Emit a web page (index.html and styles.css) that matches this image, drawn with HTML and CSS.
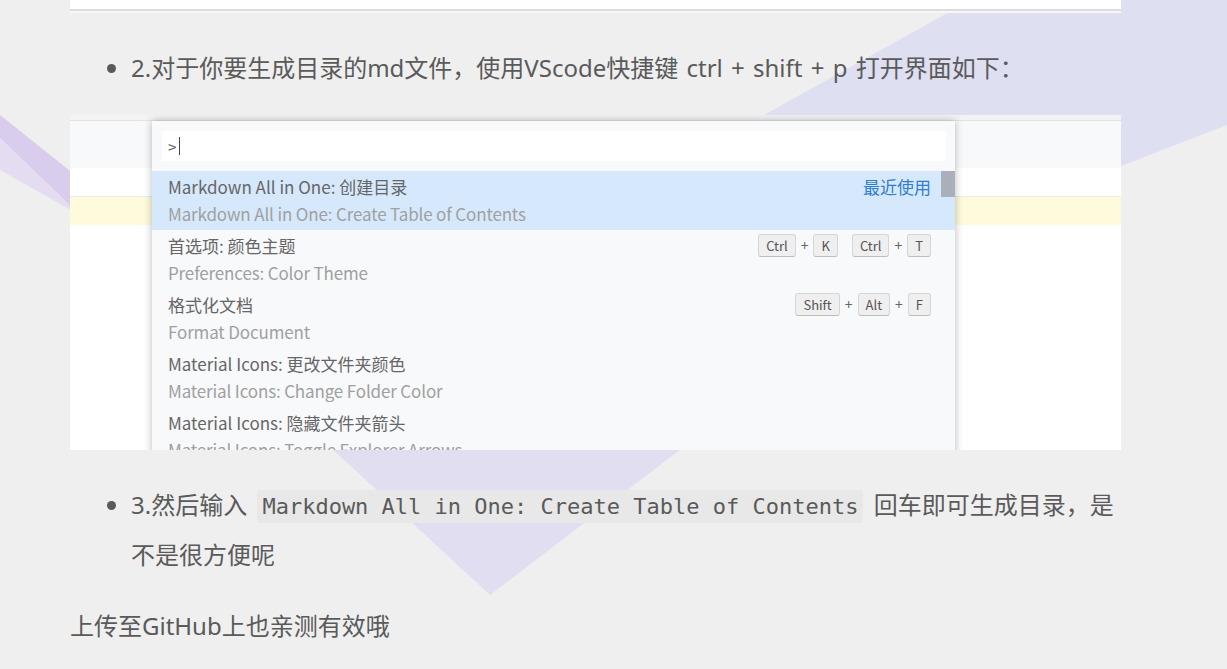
FILE: index.html
```html
<!DOCTYPE html>
<html lang="zh-CN">
<head>
<meta charset="utf-8">
<title>VSCode 生成目录</title>
<link rel="stylesheet" href="styles.css">
</head>
<body>
<svg class="bg-shapes" width="1227" height="669" viewBox="0 0 1227 669" aria-hidden="true">
  <polygon class="shape-a" points="971,0 1227,0 1227,125 1121,166 1000,200 701,150"/>
  <polygon class="shape-b" points="0,115 80,179 80,215 0,138"/>
  <polygon class="shape-c" points="0,138 80,215 0,170"/>
  <polygon class="shape-d" points="301,420 719,420 490,595"/>
</svg>
<main class="article">
  <div class="prev-shot"></div>
  <ul class="steps steps-first">
    <li>2.对于你要生成目录的md文件，使用VScode快捷键 ctrl + shift + p 打开界面如下：</li>
  </ul>
  <div class="shot">
    <div class="editor">
      <div class="ed-strip"></div>
      <div class="ed-head"></div>
      <div class="ed-blank"></div>
      <div class="ed-current"></div>
      <div class="ed-rest"></div>
    </div>
    <div class="palette">
      <div class="palette-input"><span class="prompt">&gt;</span><span class="caret"></span></div>
      <div class="palette-list">
        <div class="item active">
          <div class="item-main"><span>Markdown All in One: 创建目录</span><span class="recent">最近使用</span></div>
          <div class="item-sub">Markdown All in One: Create Table of Contents</div>
        </div>
        <div class="item">
          <div class="item-main"><span>首选项: 颜色主题</span>
            <span class="keys">
              <span class="chord"><span class="key">Ctrl</span><span class="plus">+</span><span class="key">K</span></span>
              <span class="chord"><span class="key">Ctrl</span><span class="plus">+</span><span class="key">T</span></span>
            </span>
          </div>
          <div class="item-sub">Preferences: Color Theme</div>
        </div>
        <div class="item">
          <div class="item-main"><span>格式化文档</span>
            <span class="keys">
              <span class="chord"><span class="key">Shift</span><span class="plus">+</span><span class="key">Alt</span><span class="plus">+</span><span class="key">F</span></span>
            </span>
          </div>
          <div class="item-sub">Format Document</div>
        </div>
        <div class="item">
          <div class="item-main"><span>Material Icons: 更改文件夹颜色</span></div>
          <div class="item-sub">Material Icons: Change Folder Color</div>
        </div>
        <div class="item">
          <div class="item-main"><span>Material Icons: 隐藏文件夹箭头</span></div>
          <div class="item-sub">Material Icons: Toggle Explorer Arrows</div>
        </div>
      </div>
      <div class="scrollbar"></div>
    </div>
  </div>
  <ul class="steps steps-second">
    <li>3.然后输入 <code>Markdown All in One: Create Table of Contents</code> 回车即可生成目录，是不是很方便呢</li>
  </ul>
  <p class="note">上传至GitHub上也亲测有效哦</p>
</main>
</body>
</html>
```

FILE: styles.css
```css
html, body {
  margin: 0;
  padding: 0;
}

body {
  position: relative;
  width: 1227px;
  height: 669px;
  overflow: hidden;
  background: #efefef;
  color: #5a5a5a;
  font-family: "Noto Sans", "Noto Sans CJK SC", sans-serif;
}

.bg-shapes {
  position: absolute;
  left: 0;
  top: 0;
  z-index: 0;
}

.shape-a { fill: #dedff0; }
.shape-b { fill: #d9ccec; }
.shape-c { fill: #e4dcf0; }
.shape-d { fill: #e1def1; }

.article {
  position: relative;
  z-index: 1;
  margin-left: 70px;
  width: 1051px;
  font-size: 24px;
  line-height: 48px;
  word-spacing: 2px;
}

.prev-shot {
  height: 9px;
  background: #fff;
  border-bottom: 2px solid #dcdcdc;
  box-shadow: 0 2px 0 #f7f7f7;
}

.steps {
  margin: 0;
  padding-left: 61px;
}

.steps-first {
  margin-top: 33px;
}

.steps-second {
  margin-top: 31px;
}

.steps code {
  font-family: "DejaVu Sans Mono", monospace;
  font-size: 22px;
  word-spacing: 0;
  background: #e8e8e8;
  padding: 4px 5px;
  margin: 0 2px;
  border-radius: 3px;
  color: #5a5a5a;
}

.note {
  margin: 23px 0 0;
}

.shot {
  position: relative;
  margin-top: 23px;
  height: 335px;
  overflow: hidden;
  background: #fff;
  word-spacing: 0;
}

.editor {
  display: flex;
  flex-direction: column;
  height: 100%;
}

.ed-strip {
  height: 5px;
  background: #f3f3f3;
}

.ed-head {
  height: 47px;
  background: #f8f9fa;
  border-top: 1px solid #e3e3e3;
}

.ed-blank {
  height: 28px;
  background: #fff;
  border-bottom: 1px solid #ececec;
}

.ed-current {
  height: 28px;
  background: #fefadc;
}

.ed-rest {
  flex: 1;
  background: #fff;
}

.palette {
  position: absolute;
  left: 82px;
  top: 6px;
  width: 803px;
  height: 360px;
  background: #f8f9fb;
  box-shadow: 0 0 8px rgba(0, 0, 0, 0.28);
  font-family: "Noto Sans CJK SC", "Noto Sans", sans-serif;
  line-height: normal;
}

.palette-input {
  display: flex;
  align-items: center;
  height: 30px;
  margin: 10px 9px 0 10px;
  padding-left: 6px;
  background: #fff;
  color: #616161;
  font-size: 15px;
}

.caret {
  width: 1px;
  height: 18px;
  margin-left: 3px;
  background: #444;
}

.palette-list {
  margin-top: 10px;
}

.item {
  padding: 2px 24px 3px 16px;
  font-size: 17px;
  line-height: 27px;
}

.item.active {
  background: #d6e9fc;
}

.item-main {
  display: flex;
  justify-content: space-between;
  align-items: center;
  color: #666;
}

.item-sub {
  color: #a0a0a0;
  letter-spacing: -0.15px;
}

.recent {
  color: #2e7dd1;
}

.keys {
  display: flex;
  align-items: center;
}

.chord {
  display: flex;
  align-items: center;
}

.chord + .chord {
  margin-left: 14px;
}

.key {
  box-sizing: border-box;
  height: 23px;
  padding: 0 7px;
  border: 1px solid #d6d6d6;
  border-bottom-color: #bdbdbd;
  border-radius: 3px;
  background: #efefef;
  color: #555;
  font-size: 13px;
  line-height: 21px;
}

.plus {
  margin: 0 5px;
  color: #666;
  font-size: 14px;
}

.scrollbar {
  position: absolute;
  right: 0;
  top: 50px;
  width: 14px;
  height: 26px;
  background: #a9b0b9;
}
```
